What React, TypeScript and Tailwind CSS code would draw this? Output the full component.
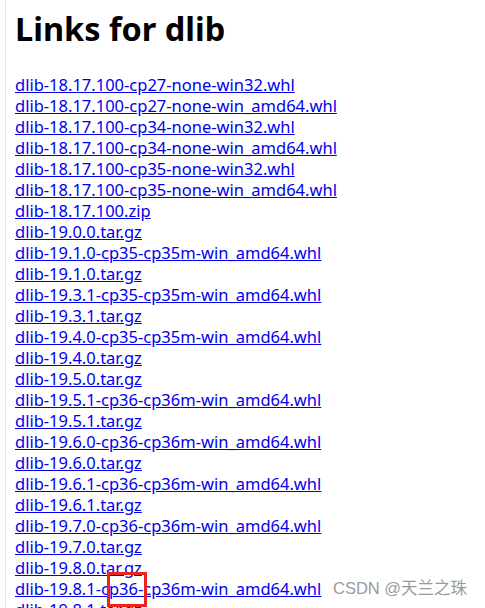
import React from "react";

const files = [
  "dlib-18.17.100-cp27-none-win32.whl",
  "dlib-18.17.100-cp27-none-win_amd64.whl",
  "dlib-18.17.100-cp34-none-win32.whl",
  "dlib-18.17.100-cp34-none-win_amd64.whl",
  "dlib-18.17.100-cp35-none-win32.whl",
  "dlib-18.17.100-cp35-none-win_amd64.whl",
  "dlib-18.17.100.zip",
  "dlib-19.0.0.tar.gz",
  "dlib-19.1.0-cp35-cp35m-win_amd64.whl",
  "dlib-19.1.0.tar.gz",
  "dlib-19.3.1-cp35-cp35m-win_amd64.whl",
  "dlib-19.3.1.tar.gz",
  "dlib-19.4.0-cp35-cp35m-win_amd64.whl",
  "dlib-19.4.0.tar.gz",
  "dlib-19.5.0.tar.gz",
  "dlib-19.5.1-cp36-cp36m-win_amd64.whl",
  "dlib-19.5.1.tar.gz",
  "dlib-19.6.0-cp36-cp36m-win_amd64.whl",
  "dlib-19.6.0.tar.gz",
  "dlib-19.6.1-cp36-cp36m-win_amd64.whl",
  "dlib-19.6.1.tar.gz",
  "dlib-19.7.0-cp36-cp36m-win_amd64.whl",
  "dlib-19.7.0.tar.gz",
  "dlib-19.8.0.tar.gz",
  "dlib-19.8.1-cp36-cp36m-win_amd64.whl",
  "dlib-19.8.1.tar.gz",
];

export default function App() {
  return (
    <div className="relative h-[608px] w-[485px] overflow-hidden bg-white font-['Noto_Sans',sans-serif]">
      <div className="ml-[5px] h-full border-l border-[#e3e3e3] pl-[9px]">
        <h1 className="pt-[9px] text-[32.5px] font-bold leading-[40px] text-black">
          Links for dlib
        </h1>
        <div className="mt-[25px] flex flex-col">
          {files.map((name) => (
            <a
              key={name}
              href="#"
              className="block whitespace-nowrap text-[16.5px] leading-[21px] text-[#0000ee] underline"
            >
              {name}
            </a>
          ))}
        </div>
      </div>

      {/* highlight box */}
      <div className="absolute left-[107px] top-[572px] h-[35px] w-[40px] border-[3px] border-[#e8261f]" />

      {/* watermark */}
      <div className="absolute left-[333px] top-[578px] text-[16.5px] leading-[21px] text-[#9a9a9a] font-['Liberation_Sans','Noto_Sans_CJK_SC',sans-serif]">
        CSDN @天兰之珠
      </div>
    </div>
  );
}
